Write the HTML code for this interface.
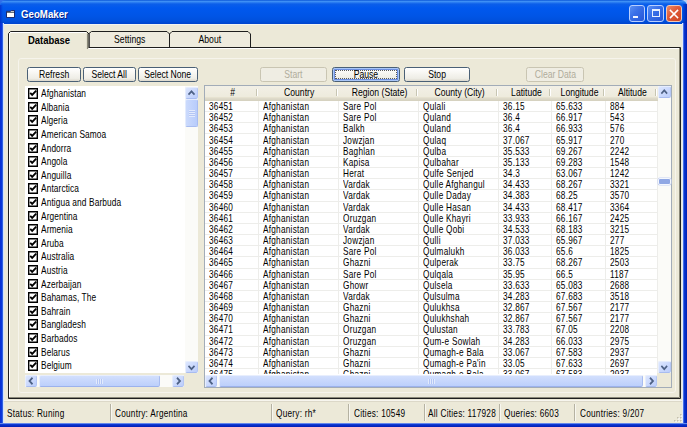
<!DOCTYPE html><html><head><meta charset="utf-8"><style>
*{box-sizing:border-box;margin:0;padding:0}
html,body{width:687px;height:427px;overflow:hidden;background:#ECE9D8;font-family:"Liberation Sans",sans-serif;font-size:8.5px;color:#000;position:relative}
div,span{position:absolute}
.title{left:0;top:0;width:687px;height:23.5px;border-radius:6px 6px 0 0;
 background:linear-gradient(to bottom,#0A56D8 0px,#3D8FF5 1.5px,#0B5EEA 4px,#0058EE 8px,#0055E6 16px,#0050DC 21px,#0046D0 23.5px);}
.tico{position:absolute;left:6px;top:9.5px}
.ttext{left:20.5px;top:6px;font-weight:bold;font-size:11px;color:#fff;line-height:16px;text-shadow:1px 1px 0 #0A1E80}
.tb{top:5px;width:16.5px;height:16.5px;border:1px solid #B8CFFF;border-radius:3px}
.tmin{left:628.5px;background:linear-gradient(135deg,#5A90F4 0%,#3A70E8 40%,#2656D8 100%)}
.tmax{left:647px;background:linear-gradient(135deg,#5A90F4 0%,#3A70E8 40%,#2656D8 100%)}
.tclose{left:665.5px;border-color:#F0C8B8;background:linear-gradient(135deg,#EC8A66 0%,#E05A38 45%,#CC4422 100%)}
.tclose svg{position:absolute;left:-0.5px;top:-0.5px}
.minbar{left:3.8px;top:9.8px;width:5.2px;height:2.2px;background:#F0F4FF}
.maxbox{left:3.5px;top:3px;width:8.5px;height:7.8px;border:1px solid #E8F0FF;border-top-width:2px}
.bl{left:0;top:23px;width:4px;height:404px;background:linear-gradient(to right,#0A2FD0 0,#0A3AE0 2px,#3060E0 2.5px,#C8DAFF 3px,#DCE8FF 4px);z-index:8}
.br{left:682px;top:23px;width:5px;height:404px;background:linear-gradient(to right,#F0F0EC 0,#D8E4FF 1px,#2A58E0 1.6px,#0A34D0 2.5px,#0020B4 5px);z-index:8}
.bb{left:0;top:422.6px;width:687px;height:4.4px;background:linear-gradient(to bottom,#C8D8FA 0,#2A58E0 0.8px,#0A34D0 1.6px,#001CB0 4.4px);z-index:8}
.tab{top:31px;height:17px;border:1px solid #222;border-bottom:none;border-radius:2px 2px 0 0;background:#EEEBDD;text-align:center;line-height:16px}
.tab span{position:static}
.t1{left:8px;width:81px;font-weight:bold;font-size:10.8px;z-index:3;height:18px;border-right:2px solid #555;background:#ECE9D8;box-shadow:inset 1px 1px 0 #fff}
.t2{left:89px;width:81px}
.t3{left:169.5px;width:81px}
.panel{left:8px;top:47px;width:673px;height:352px;border:1px solid #222;border-right:2px solid #333;border-bottom:2px solid #333;box-shadow:inset 1px 1px 0 #fff;z-index:1}
.inner{left:17.5px;top:57.5px;width:658px;height:335.5px;border:1px solid #F6F4EC;border-radius:3px;z-index:2}
.btn{top:67px;height:14.5px;border:1px solid #4A6076;border-radius:2.5px;background:linear-gradient(to bottom,#FFFFFF 0%,#F6F5F0 45%,#EEEDE6 80%,#DCD8CC 100%);text-align:center;line-height:14px;z-index:5}
.btn span{position:static}
.btn.dis{border-color:#C9C5B2;background:#EFEDE3;color:#B0AC9C}
.btn.focus{box-shadow:inset 0 0 0 1px #A8C6F8,inset 0 0 0 2px #6D8FE0}
.frect{left:1.5px;top:1.5px;right:2.5px;bottom:1.5px;border:1px dotted #5a5a5a}
.lb{left:25px;top:86px;width:160px;height:287px;background:#fff;z-index:5;overflow:hidden}
.lbi{left:0;height:13.6px;width:160px}
.lbi .cb{left:3px;top:2px;width:10.2px;height:10.4px;box-shadow:inset 0 0 0 1.4px #000;background:#fff}
.lbi .cb svg{position:absolute;left:0;top:0}
.lbi span{left:16px;top:1px;line-height:13.6px;white-space:nowrap}
.vsb,.hsb{background:#FBFBF8;z-index:6}
.sbtn{background:linear-gradient(to bottom right,#DCE6FE,#BBCDFB);border:1px solid #E6EDFD;border-bottom-color:#A8BCF0;border-right-color:#B4C6F4;border-radius:2px}
.sbtn svg{position:absolute;left:-1px;top:-1px}
.thumb{background:linear-gradient(to right,#CBDAFC,#B8CCFB);border:1px solid #E3EBFD;border-right-color:#A8BCF0;border-bottom-color:#A8BCF0;border-radius:2px}
.thumbh{background:linear-gradient(to bottom,#D2DFFD,#BCCFFB);border:1px solid #E8EEFD;border-bottom-color:#9CB2EC;border-right-color:#A8BCF0;border-radius:2px}
.griph{left:50%;top:3px;width:7px;height:5px;margin-left:-3.5px;background:repeating-linear-gradient(to right,#E2EAFD 0 1px,#B4C6F4 1px 2px)}
.lvv .thumb{background:#90A8E4;border:1px solid #F4F7FE;box-shadow:0 0 0 0.5px #C8D4F4}
.lv{border:1px solid #A2ACB8;background:#fff;z-index:5;overflow:hidden}
.hdr{left:0;top:0;width:466px;height:14.5px;background:linear-gradient(to bottom,#F2F0E6 0,#EEEBDD 10.5px,#E6E2D0 11.5px,#DEDACA 12.5px,#D6D2C0 14.5px)}
.hc{top:0;height:14px;text-align:center;line-height:14px;margin-left:1.5px}
.hc span{position:static}
.hsep{top:2.5px;width:1px;height:7.5px;background:#C7C5B2;box-shadow:1px 0 0 #fff}
.rows{left:0;top:14.5px;width:466px;height:273px;overflow:hidden}
.row{left:0;width:466px;height:10.17px;border-bottom:1px solid #EDEDEA;line-height:10.5px}
.row span{top:0;white-space:nowrap}
.vgrid{top:0;width:1px;height:288px;background:#EDEDEA}
.corner{background:#ECE9D8;z-index:6}
.status{left:3px;top:399px;width:680px;height:24px;background:linear-gradient(to bottom,#ECE9D8 0,#ECE9D8 1px,#F7F5EE 1px,#F7F5EE 2px,#DCD8C8 2px,#DCD8C8 3px,#ECE9D8 3px)}
.sp{top:2.8px;height:23px;line-height:23px;white-space:nowrap}
.sp span{position:static}
.ssep{top:5px;width:1px;height:17px;background:#B5B2A2;box-shadow:1px 0 0 #F8F7F0}
.grip{position:absolute;left:669px;top:12px}
/* text scaling */
html,body{font-size:9.8px}
.row span{transform:scale(.84,1.04);transform-origin:0 50%;letter-spacing:.3px}
.lbi span{transform:scale(.85,1.04);transform-origin:0 50%;letter-spacing:.12px}
.sp span{display:inline-block;transform:scale(.84,1.04);transform-origin:0 50%;letter-spacing:.3px}
.btn span,.hc span,.tab span{display:inline-block;transform:scale(.88,1.04);transform-origin:50% 50%}

.tabsvg{position:absolute;left:0;top:0;z-index:1}
.tabt{top:32px;height:16px;line-height:16px;text-align:center;z-index:2}
.tabt span{position:static;display:inline-block;transform:scale(.88,1.04);transform-origin:50% 50%}
.ttext span{position:static;display:inline-block;transform:scale(.88,1.05);transform-origin:0 50%}
.gripv{left:3px;top:50%;width:6px;height:7px;margin-top:-3.5px;background:repeating-linear-gradient(to bottom,#E2EAFD 0 1px,#B4C6F4 1px 2px)}
.tline{left:3px;top:23.5px;width:680px;height:1px;background:#F4F4F0;z-index:0}

</style></head><body>
<div style="left:0;top:0;width:7px;height:7px;background:#2F6EEA"></div><div style="left:680px;top:0;width:7px;height:7px;background:#B8D0F4"></div>
<div class="title"><svg class="tico" width="9" height="8" viewBox="0 0 10 9"><path d="M0.5 1.5 H5 L6 0.5 H9.5 V8.5 H0.5 Z" fill="#fff" stroke="#0A1A60" stroke-width="1"/><path d="M1 2.5 H9" stroke="#123" stroke-width="1"/></svg><div class="ttext"><span>GeoMaker</span></div><div style="left:683px;top:4px;width:4px;height:20px;background:linear-gradient(to right,rgba(0,40,190,.3),rgba(0,30,170,.85))"></div><div style="left:0;top:5px;width:3px;height:19px;background:linear-gradient(to right,rgba(0,30,190,.6),rgba(0,40,200,0))"></div><div class="tb tmin"><div class="minbar"></div></div><div class="tb tmax"><div class="maxbox"></div></div><div class="tb tclose"><svg width="16" height="16" viewBox="0 0 16 16"><path d="M4.5 4.5 L11.5 11.5 M11.5 4.5 L4.5 11.5" stroke="#fff" stroke-width="1.6" stroke-linecap="square"/></svg></div></div>
<div class="bl"></div><div class="br"></div><div class="bb"></div><div class="tline"></div>
<svg class="tabsvg" width="687" height="427" viewBox="0 0 687 427"><path d="M89 48 V33.5 L91.5 31.5 H167 L169.5 34 L172 31.5 H248 L250.5 34 V48 Z" fill="#EEEBDE" stroke="none"/><path d="M89 47.5 V33.5 L91.5 31.5 H167 L169.5 34 L172 31.5 H248 L250.5 34 V47.5" stroke="#1E1E1E" stroke-width="1" fill="none"/><path d="M169.5 34 V47.5" stroke="#1E1E1E" stroke-width="1" fill="none"/><path d="M8.5 48 H680.5 V398 H8.5 Z" fill="#ECE9D8" stroke="none"/><path d="M9.5 398 V48.5 H680" stroke="#fff" stroke-width="1" fill="none"/><path d="M679.5 48 V397.5 H9" stroke="#8A8878" stroke-width="1" fill="none"/><path d="M8.5 47 V398.5 H680.5 V47.5 H8" stroke="#1E1E1E" stroke-width="1" fill="none"/><path d="M9 49.5 V33.5 L10.5 31.5 H86.5 L88.5 34 V49.5 Z" fill="#ECE9D8" stroke="none"/><path d="M9.5 49.5 V33.5 L11 32.5 H86" stroke="#fff" stroke-width="1" fill="none"/><path d="M87.5 33.5 V49" stroke="#8A8878" stroke-width="1.2" fill="none"/><path d="M8.5 48.5 V33.5 L10.5 31.5 H86.5 L89 34 V47.5" stroke="#1E1E1E" stroke-width="1" fill="none"/></svg>
<div class="tabt" style="left:8px;width:82px;font-weight:bold;font-size:10.8px"><span>Database</span></div>
<div class="tabt" style="left:89px;width:81px"><span>Settings</span></div>
<div class="tabt" style="left:169.5px;width:81px"><span>About</span></div>
<div class="inner"></div>
<div class="btn " style="left:27px;width:54px"><span>Refresh</span></div>
<div class="btn " style="left:83px;width:53px"><span>Select All</span></div>
<div class="btn " style="left:138px;width:60px"><span>Select None</span></div>
<div class="btn dis" style="left:260px;width:67px"><span>Start</span></div>
<div class="btn focus" style="left:332px;width:68px"><div class="frect"></div><span>Pause</span></div>
<div class="btn " style="left:404px;width:66px"><span>Stop</span></div>
<div class="btn dis" style="left:526px;width:58px"><span>Clear Data</span></div>
<div class="lb">
<div class="lbi" style="top:0.20px"><div class="cb"><svg width="10" height="10" viewBox="0 0 10 10"><path d="M2.2 4.8 L4.2 6.9 L8.2 2.7" stroke="#000" stroke-width="1.9" fill="none"/></svg></div><span>Afghanistan</span></div>
<div class="lbi" style="top:13.80px"><div class="cb"><svg width="10" height="10" viewBox="0 0 10 10"><path d="M2.2 4.8 L4.2 6.9 L8.2 2.7" stroke="#000" stroke-width="1.9" fill="none"/></svg></div><span>Albania</span></div>
<div class="lbi" style="top:27.40px"><div class="cb"><svg width="10" height="10" viewBox="0 0 10 10"><path d="M2.2 4.8 L4.2 6.9 L8.2 2.7" stroke="#000" stroke-width="1.9" fill="none"/></svg></div><span>Algeria</span></div>
<div class="lbi" style="top:41.00px"><div class="cb"><svg width="10" height="10" viewBox="0 0 10 10"><path d="M2.2 4.8 L4.2 6.9 L8.2 2.7" stroke="#000" stroke-width="1.9" fill="none"/></svg></div><span>American Samoa</span></div>
<div class="lbi" style="top:54.60px"><div class="cb"><svg width="10" height="10" viewBox="0 0 10 10"><path d="M2.2 4.8 L4.2 6.9 L8.2 2.7" stroke="#000" stroke-width="1.9" fill="none"/></svg></div><span>Andorra</span></div>
<div class="lbi" style="top:68.20px"><div class="cb"><svg width="10" height="10" viewBox="0 0 10 10"><path d="M2.2 4.8 L4.2 6.9 L8.2 2.7" stroke="#000" stroke-width="1.9" fill="none"/></svg></div><span>Angola</span></div>
<div class="lbi" style="top:81.80px"><div class="cb"><svg width="10" height="10" viewBox="0 0 10 10"><path d="M2.2 4.8 L4.2 6.9 L8.2 2.7" stroke="#000" stroke-width="1.9" fill="none"/></svg></div><span>Anguilla</span></div>
<div class="lbi" style="top:95.40px"><div class="cb"><svg width="10" height="10" viewBox="0 0 10 10"><path d="M2.2 4.8 L4.2 6.9 L8.2 2.7" stroke="#000" stroke-width="1.9" fill="none"/></svg></div><span>Antarctica</span></div>
<div class="lbi" style="top:109.00px"><div class="cb"><svg width="10" height="10" viewBox="0 0 10 10"><path d="M2.2 4.8 L4.2 6.9 L8.2 2.7" stroke="#000" stroke-width="1.9" fill="none"/></svg></div><span>Antigua and Barbuda</span></div>
<div class="lbi" style="top:122.60px"><div class="cb"><svg width="10" height="10" viewBox="0 0 10 10"><path d="M2.2 4.8 L4.2 6.9 L8.2 2.7" stroke="#000" stroke-width="1.9" fill="none"/></svg></div><span>Argentina</span></div>
<div class="lbi" style="top:136.20px"><div class="cb"><svg width="10" height="10" viewBox="0 0 10 10"><path d="M2.2 4.8 L4.2 6.9 L8.2 2.7" stroke="#000" stroke-width="1.9" fill="none"/></svg></div><span>Armenia</span></div>
<div class="lbi" style="top:149.80px"><div class="cb"><svg width="10" height="10" viewBox="0 0 10 10"><path d="M2.2 4.8 L4.2 6.9 L8.2 2.7" stroke="#000" stroke-width="1.9" fill="none"/></svg></div><span>Aruba</span></div>
<div class="lbi" style="top:163.40px"><div class="cb"><svg width="10" height="10" viewBox="0 0 10 10"><path d="M2.2 4.8 L4.2 6.9 L8.2 2.7" stroke="#000" stroke-width="1.9" fill="none"/></svg></div><span>Australia</span></div>
<div class="lbi" style="top:177.00px"><div class="cb"><svg width="10" height="10" viewBox="0 0 10 10"><path d="M2.2 4.8 L4.2 6.9 L8.2 2.7" stroke="#000" stroke-width="1.9" fill="none"/></svg></div><span>Austria</span></div>
<div class="lbi" style="top:190.60px"><div class="cb"><svg width="10" height="10" viewBox="0 0 10 10"><path d="M2.2 4.8 L4.2 6.9 L8.2 2.7" stroke="#000" stroke-width="1.9" fill="none"/></svg></div><span>Azerbaijan</span></div>
<div class="lbi" style="top:204.20px"><div class="cb"><svg width="10" height="10" viewBox="0 0 10 10"><path d="M2.2 4.8 L4.2 6.9 L8.2 2.7" stroke="#000" stroke-width="1.9" fill="none"/></svg></div><span>Bahamas, The</span></div>
<div class="lbi" style="top:217.80px"><div class="cb"><svg width="10" height="10" viewBox="0 0 10 10"><path d="M2.2 4.8 L4.2 6.9 L8.2 2.7" stroke="#000" stroke-width="1.9" fill="none"/></svg></div><span>Bahrain</span></div>
<div class="lbi" style="top:231.40px"><div class="cb"><svg width="10" height="10" viewBox="0 0 10 10"><path d="M2.2 4.8 L4.2 6.9 L8.2 2.7" stroke="#000" stroke-width="1.9" fill="none"/></svg></div><span>Bangladesh</span></div>
<div class="lbi" style="top:245.00px"><div class="cb"><svg width="10" height="10" viewBox="0 0 10 10"><path d="M2.2 4.8 L4.2 6.9 L8.2 2.7" stroke="#000" stroke-width="1.9" fill="none"/></svg></div><span>Barbados</span></div>
<div class="lbi" style="top:258.60px"><div class="cb"><svg width="10" height="10" viewBox="0 0 10 10"><path d="M2.2 4.8 L4.2 6.9 L8.2 2.7" stroke="#000" stroke-width="1.9" fill="none"/></svg></div><span>Belarus</span></div>
<div class="lbi" style="top:272.20px"><div class="cb"><svg width="10" height="10" viewBox="0 0 10 10"><path d="M2.2 4.8 L4.2 6.9 L8.2 2.7" stroke="#000" stroke-width="1.9" fill="none"/></svg></div><span>Belgium</span></div>
</div>
<div class="vsb " style="left:185px;top:86px;width:13px;height:286.5px"><div class="sbtn" style="left:0;top:1px;width:13px;height:12px"><svg width="13" height="12" viewBox="0 0 13 11" preserveAspectRatio="none"><path d="M3.5 7 L6.5 4 L9.5 7" stroke="#4D6185" stroke-width="1.7" fill="none"/></svg></div><div class="thumb" style="left:0;top:13px;width:13px;height:28px"><div class="gripv"></div></div><div class="sbtn" style="left:0;top:274.5px;width:13px;height:12px"><svg width="13" height="12" viewBox="0 0 13 11" preserveAspectRatio="none"><path d="M3.5 4.5 L6.5 7.5 L9.5 4.5" stroke="#4D6185" stroke-width="1.7" fill="none"/></svg></div></div>
<div class="hsb" style="left:25px;top:375px;width:159px;height:12px"><div class="sbtn" style="left:0;top:0;width:12px;height:12px"><svg width="12" height="12" viewBox="0 0 12 11" preserveAspectRatio="none"><path d="M7.5 2.5 L4.5 5.5 L7.5 8.5" stroke="#4D6185" stroke-width="1.7" fill="none"/></svg></div><div class="thumbh" style="left:13.5px;top:0;width:121.5px;height:12px"><div class="griph"></div></div><div class="sbtn" style="left:147px;top:0;width:12px;height:12px"><svg width="12" height="12" viewBox="0 0 12 11" preserveAspectRatio="none"><path d="M5 2.5 L8 5.5 L5 8.5" stroke="#4D6185" stroke-width="1.7" fill="none"/></svg></div></div>
<div class="lv" style="left:204px;top:85px;width:468px;height:303px">
<div class="hdr">
<div class="hc" style="left:0px;width:53px"><span>#</span></div>
<div class="hsep" style="left:50.5px"></div>
<div class="hc" style="left:53px;width:80px"><span>Country</span></div>
<div class="hsep" style="left:130.5px"></div>
<div class="hc" style="left:133px;width:80px"><span>Region (State)</span></div>
<div class="hsep" style="left:210.5px"></div>
<div class="hc" style="left:213px;width:80px"><span>County (City)</span></div>
<div class="hsep" style="left:290.5px"></div>
<div class="hc" style="left:293px;width:53px"><span>Latitude</span></div>
<div class="hsep" style="left:343.5px"></div>
<div class="hc" style="left:346px;width:54px"><span>Longitude</span></div>
<div class="hsep" style="left:397.5px"></div>
<div class="hc" style="left:400px;width:52px"><span>Altitude</span></div>
<div class="hsep" style="left:449.5px"></div>
</div>
<div class="rows">
<div class="row" style="top:1.50px">
<span style="left:4px">36451</span>
<span style="left:58px">Afghanistan</span>
<span style="left:138px">Sare Pol</span>
<span style="left:218px">Qulali</span>
<span style="left:298px">36.15</span>
<span style="left:351px">65.633</span>
<span style="left:405px">884</span>
</div>
<div class="row" style="top:12.67px">
<span style="left:4px">36452</span>
<span style="left:58px">Afghanistan</span>
<span style="left:138px">Sare Pol</span>
<span style="left:218px">Quland</span>
<span style="left:298px">36.4</span>
<span style="left:351px">66.917</span>
<span style="left:405px">543</span>
</div>
<div class="row" style="top:23.84px">
<span style="left:4px">36453</span>
<span style="left:58px">Afghanistan</span>
<span style="left:138px">Balkh</span>
<span style="left:218px">Quland</span>
<span style="left:298px">36.4</span>
<span style="left:351px">66.933</span>
<span style="left:405px">576</span>
</div>
<div class="row" style="top:35.01px">
<span style="left:4px">36454</span>
<span style="left:58px">Afghanistan</span>
<span style="left:138px">Jowzjan</span>
<span style="left:218px">Qulaq</span>
<span style="left:298px">37.067</span>
<span style="left:351px">65.917</span>
<span style="left:405px">270</span>
</div>
<div class="row" style="top:46.18px">
<span style="left:4px">36455</span>
<span style="left:58px">Afghanistan</span>
<span style="left:138px">Baghlan</span>
<span style="left:218px">Qulba</span>
<span style="left:298px">35.533</span>
<span style="left:351px">69.267</span>
<span style="left:405px">2242</span>
</div>
<div class="row" style="top:57.35px">
<span style="left:4px">36456</span>
<span style="left:58px">Afghanistan</span>
<span style="left:138px">Kapisa</span>
<span style="left:218px">Qulbahar</span>
<span style="left:298px">35.133</span>
<span style="left:351px">69.283</span>
<span style="left:405px">1548</span>
</div>
<div class="row" style="top:68.52px">
<span style="left:4px">36457</span>
<span style="left:58px">Afghanistan</span>
<span style="left:138px">Herat</span>
<span style="left:218px">Qulfe Senjed</span>
<span style="left:298px">34.3</span>
<span style="left:351px">63.067</span>
<span style="left:405px">1242</span>
</div>
<div class="row" style="top:79.69px">
<span style="left:4px">36458</span>
<span style="left:58px">Afghanistan</span>
<span style="left:138px">Vardak</span>
<span style="left:218px">Qulle Afghangul</span>
<span style="left:298px">34.433</span>
<span style="left:351px">68.267</span>
<span style="left:405px">3321</span>
</div>
<div class="row" style="top:90.86px">
<span style="left:4px">36459</span>
<span style="left:58px">Afghanistan</span>
<span style="left:138px">Vardak</span>
<span style="left:218px">Qulle Daday</span>
<span style="left:298px">34.383</span>
<span style="left:351px">68.25</span>
<span style="left:405px">3570</span>
</div>
<div class="row" style="top:102.03px">
<span style="left:4px">36460</span>
<span style="left:58px">Afghanistan</span>
<span style="left:138px">Vardak</span>
<span style="left:218px">Qulle Hasan</span>
<span style="left:298px">34.433</span>
<span style="left:351px">68.417</span>
<span style="left:405px">3364</span>
</div>
<div class="row" style="top:113.20px">
<span style="left:4px">36461</span>
<span style="left:58px">Afghanistan</span>
<span style="left:138px">Oruzgan</span>
<span style="left:218px">Qulle Khayri</span>
<span style="left:298px">33.933</span>
<span style="left:351px">66.167</span>
<span style="left:405px">2425</span>
</div>
<div class="row" style="top:124.37px">
<span style="left:4px">36462</span>
<span style="left:58px">Afghanistan</span>
<span style="left:138px">Vardak</span>
<span style="left:218px">Qulle Qobi</span>
<span style="left:298px">34.533</span>
<span style="left:351px">68.183</span>
<span style="left:405px">3215</span>
</div>
<div class="row" style="top:135.54px">
<span style="left:4px">36463</span>
<span style="left:58px">Afghanistan</span>
<span style="left:138px">Jowzjan</span>
<span style="left:218px">Qulli</span>
<span style="left:298px">37.033</span>
<span style="left:351px">65.967</span>
<span style="left:405px">277</span>
</div>
<div class="row" style="top:146.71px">
<span style="left:4px">36464</span>
<span style="left:58px">Afghanistan</span>
<span style="left:138px">Sare Pol</span>
<span style="left:218px">Qulmalukh</span>
<span style="left:298px">36.033</span>
<span style="left:351px">65.6</span>
<span style="left:405px">1825</span>
</div>
<div class="row" style="top:157.88px">
<span style="left:4px">36465</span>
<span style="left:58px">Afghanistan</span>
<span style="left:138px">Ghazni</span>
<span style="left:218px">Qulperak</span>
<span style="left:298px">33.75</span>
<span style="left:351px">68.267</span>
<span style="left:405px">2503</span>
</div>
<div class="row" style="top:169.05px">
<span style="left:4px">36466</span>
<span style="left:58px">Afghanistan</span>
<span style="left:138px">Sare Pol</span>
<span style="left:218px">Qulqala</span>
<span style="left:298px">35.95</span>
<span style="left:351px">66.5</span>
<span style="left:405px">1187</span>
</div>
<div class="row" style="top:180.22px">
<span style="left:4px">36467</span>
<span style="left:58px">Afghanistan</span>
<span style="left:138px">Ghowr</span>
<span style="left:218px">Qulsela</span>
<span style="left:298px">33.633</span>
<span style="left:351px">65.083</span>
<span style="left:405px">2688</span>
</div>
<div class="row" style="top:191.39px">
<span style="left:4px">36468</span>
<span style="left:58px">Afghanistan</span>
<span style="left:138px">Vardak</span>
<span style="left:218px">Qulsulma</span>
<span style="left:298px">34.283</span>
<span style="left:351px">67.683</span>
<span style="left:405px">3518</span>
</div>
<div class="row" style="top:202.56px">
<span style="left:4px">36469</span>
<span style="left:58px">Afghanistan</span>
<span style="left:138px">Ghazni</span>
<span style="left:218px">Qulukhsa</span>
<span style="left:298px">32.867</span>
<span style="left:351px">67.567</span>
<span style="left:405px">2177</span>
</div>
<div class="row" style="top:213.73px">
<span style="left:4px">36470</span>
<span style="left:58px">Afghanistan</span>
<span style="left:138px">Ghazni</span>
<span style="left:218px">Qulukhshah</span>
<span style="left:298px">32.867</span>
<span style="left:351px">67.567</span>
<span style="left:405px">2177</span>
</div>
<div class="row" style="top:224.90px">
<span style="left:4px">36471</span>
<span style="left:58px">Afghanistan</span>
<span style="left:138px">Oruzgan</span>
<span style="left:218px">Qulustan</span>
<span style="left:298px">33.783</span>
<span style="left:351px">67.05</span>
<span style="left:405px">2208</span>
</div>
<div class="row" style="top:236.07px">
<span style="left:4px">36472</span>
<span style="left:58px">Afghanistan</span>
<span style="left:138px">Oruzgan</span>
<span style="left:218px">Qum-e Sowlah</span>
<span style="left:298px">34.283</span>
<span style="left:351px">66.033</span>
<span style="left:405px">2975</span>
</div>
<div class="row" style="top:247.24px">
<span style="left:4px">36473</span>
<span style="left:58px">Afghanistan</span>
<span style="left:138px">Ghazni</span>
<span style="left:218px">Qumagh-e Bala</span>
<span style="left:298px">33.067</span>
<span style="left:351px">67.583</span>
<span style="left:405px">2937</span>
</div>
<div class="row" style="top:258.41px">
<span style="left:4px">36474</span>
<span style="left:58px">Afghanistan</span>
<span style="left:138px">Ghazni</span>
<span style="left:218px">Qumagh-e Pa'in</span>
<span style="left:298px">33.05</span>
<span style="left:351px">67.633</span>
<span style="left:405px">2697</span>
</div>
<div class="row" style="top:269.58px">
<span style="left:4px">36475</span>
<span style="left:58px">Afghanistan</span>
<span style="left:138px">Ghazni</span>
<span style="left:218px">Qumagh-e Bala</span>
<span style="left:298px">33.067</span>
<span style="left:351px">67.583</span>
<span style="left:405px">2937</span>
</div>
<div class="vgrid" style="left:52.5px"></div>
<div class="vgrid" style="left:132.5px"></div>
<div class="vgrid" style="left:212.5px"></div>
<div class="vgrid" style="left:292.5px"></div>
<div class="vgrid" style="left:345.5px"></div>
<div class="vgrid" style="left:399.5px"></div>
<div class="vgrid" style="left:451.5px"></div>
</div>
</div>
<div class="vsb lvv" style="left:658px;top:86px;width:12.5px;height:287px"><div class="sbtn" style="left:0;top:0px;width:12.5px;height:12px"><svg width="12.5" height="12" viewBox="0 0 13 11" preserveAspectRatio="none"><path d="M3.5 7 L6.5 4 L9.5 7" stroke="#4D6185" stroke-width="1.7" fill="none"/></svg></div><div class="thumb" style="left:0;top:92.2px;width:12.5px;height:6.8px"></div><div class="sbtn" style="left:0;top:275px;width:12.5px;height:12px"><svg width="12.5" height="12" viewBox="0 0 13 11" preserveAspectRatio="none"><path d="M3.5 4.5 L6.5 7.5 L9.5 4.5" stroke="#4D6185" stroke-width="1.7" fill="none"/></svg></div></div>
<div class="hsb" style="left:205px;top:375px;width:452px;height:12px"><div class="sbtn" style="left:0;top:0;width:12px;height:12px"><svg width="12" height="12" viewBox="0 0 12 11" preserveAspectRatio="none"><path d="M7.5 2.5 L4.5 5.5 L7.5 8.5" stroke="#4D6185" stroke-width="1.7" fill="none"/></svg></div><div class="thumbh" style="left:14px;top:0;width:424px;height:12px"><div class="griph"></div></div><div class="sbtn" style="left:440px;top:0;width:12px;height:12px"><svg width="12" height="12" viewBox="0 0 12 11" preserveAspectRatio="none"><path d="M5 2.5 L8 5.5 L5 8.5" stroke="#4D6185" stroke-width="1.7" fill="none"/></svg></div></div>
<div class="corner" style="left:657px;top:373px;width:14px;height:14px"></div>
<div class="status">
<div class="sp" style="left:3.8px"><span>Status: Runing</span></div>
<div class="sp" style="left:112px"><span>Country: Argentina</span></div>
<div class="sp" style="left:273px"><span>Query: rh*</span></div>
<div class="sp" style="left:350.5px"><span>Cities: 10549</span></div>
<div class="sp" style="left:425px"><span>All Cities: 117928</span></div>
<div class="sp" style="left:501px"><span>Queries: 6603</span></div>
<div class="sp" style="left:576.5px"><span>Countries: 9/207</span></div>
<div class="ssep" style="left:107px"></div>
<div class="ssep" style="left:268px"></div>
<div class="ssep" style="left:345px"></div>
<div class="ssep" style="left:421px"></div>
<div class="ssep" style="left:496px"></div>
<div class="ssep" style="left:571px"></div>
<svg class="grip" width="11" height="11" viewBox="0 0 11 11"><rect x="9" y="10" width="1.5" height="1.5" fill="#fff"/><rect x="8" y="9" width="1.5" height="1.5" fill="#C3BFAE"/><rect x="9" y="7" width="1.5" height="1.5" fill="#fff"/><rect x="8" y="6" width="1.5" height="1.5" fill="#C3BFAE"/><rect x="9" y="4" width="1.5" height="1.5" fill="#fff"/><rect x="8" y="3" width="1.5" height="1.5" fill="#C3BFAE"/><rect x="6" y="10" width="1.5" height="1.5" fill="#fff"/><rect x="5" y="9" width="1.5" height="1.5" fill="#C3BFAE"/><rect x="6" y="7" width="1.5" height="1.5" fill="#fff"/><rect x="5" y="6" width="1.5" height="1.5" fill="#C3BFAE"/><rect x="3" y="10" width="1.5" height="1.5" fill="#fff"/><rect x="2" y="9" width="1.5" height="1.5" fill="#C3BFAE"/></svg>
</div>
</body></html>
